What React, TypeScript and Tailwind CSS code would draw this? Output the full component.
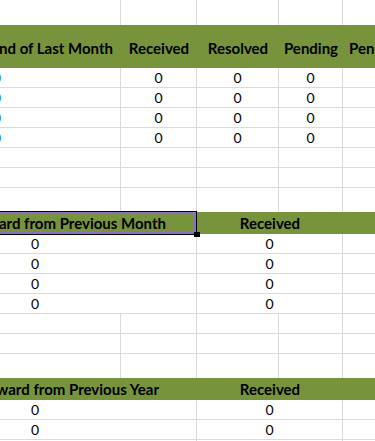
import React from "react";

const line = "border-[#dadada]";

function Zero({ blue }: { blue?: boolean }) {
  return <span className={blue ? "text-[#1b78d0]" : "text-black"}>0</span>;
}

function FourCols({ withZeros, rowClass }: { withZeros: boolean; rowClass: string }) {
  return (
    <div className={`flex ${rowClass}`}>
      <div className={`w-[121px] shrink-0 border-r ${line} flex items-center justify-start overflow-hidden`}>
        {withZeros && (
          <span className="-ml-[7px]">
            <Zero blue />
          </span>
        )}
      </div>
      <div className={`w-[76px] shrink-0 border-r ${line} flex items-center justify-center`}>
        {withZeros && <Zero />}
      </div>
      <div className={`w-[82px] shrink-0 border-r ${line} flex items-center justify-center`}>
        {withZeros && <Zero />}
      </div>
      <div className={`w-[64px] shrink-0 border-r ${line} flex items-center justify-center`}>
        {withZeros && <Zero />}
      </div>
      <div className="flex-1" />
    </div>
  );
}

function MergedRow({ zeros, rowClass }: { zeros: boolean; rowClass: string }) {
  return (
    <div className={`flex ${rowClass}`}>
      <div className={`w-[197px] shrink-0 border-r ${line} flex items-center pl-[31px]`}>
        {zeros && <Zero />}
      </div>
      <div className={`w-[146px] shrink-0 border-r ${line} flex items-center justify-center`}>
        {zeros && <Zero />}
      </div>
      <div className="flex-1" />
    </div>
  );
}

function GreenHeader({ title, pr, selected }: { title: string; pr: string; selected?: boolean }) {
  return (
    <div className="flex h-[22px] bg-[#77933c] font-bold text-[15px]">
      <div className={`relative w-[197px] shrink-0 flex items-center justify-end overflow-visible ${pr}`}>
        <span className="whitespace-nowrap">{title}</span>
        {selected && (
          <div className="absolute -left-[3px] right-0 -top-px -bottom-px z-10 border border-black">
            <div className="w-full h-full border-2 border-[#8b6fc7]" />
            <div className="absolute -right-[4px] -bottom-[3px] w-[6px] h-[5px] bg-black" />
          </div>
        )}
      </div>
      <div className="w-[146px] shrink-0 flex items-center justify-center">
        <span>Received</span>
      </div>
      <div className="flex-1" />
    </div>
  );
}

export default function App() {
  return (
    <div className="w-[375px] h-[441px] overflow-hidden bg-white font-['Lato',sans-serif] text-[14px] text-black leading-none">
      {/* Section 1 */}
      <FourCols withZeros={false} rowClass="h-[25px]" />
      <div className="flex h-[43px] bg-[#77933c] font-bold text-[15px]">
        <div className="w-[121px] shrink-0 flex items-center justify-end pr-[8px] pt-[3px] overflow-hidden">
          <span className="whitespace-nowrap">Pending at the End of Last Month</span>
        </div>
        <div className="w-[76px] shrink-0 flex items-center justify-center pt-[3px]">Received</div>
        <div className="w-[82px] shrink-0 flex items-center justify-center pt-[3px]">Resolved</div>
        <div className="w-[64px] shrink-0 flex items-center justify-center pt-[3px]">Pending</div>
        <div className="flex-1 flex items-center pl-[6px] pt-[3px] overflow-hidden">
          <span className="whitespace-nowrap">Pending %</span>
        </div>
      </div>
      <FourCols withZeros rowClass={`h-[20px] border-b ${line}`} />
      <FourCols withZeros rowClass={`h-[20px] border-b ${line}`} />
      <FourCols withZeros rowClass={`h-[20px] border-b ${line}`} />
      <FourCols withZeros rowClass={`h-[20px] border-b ${line}`} />
      <FourCols withZeros={false} rowClass={`h-[20px] border-b ${line}`} />
      <FourCols withZeros={false} rowClass={`h-[20px] border-b ${line}`} />
      <FourCols withZeros={false} rowClass="h-[24px]" />

      {/* Section 2 */}
      <GreenHeader title="Brought Forward from Previous Month" pr="pr-[31px]" selected />
      <MergedRow zeros rowClass={`h-[20px] border-b ${line}`} />
      <MergedRow zeros rowClass={`h-[20px] border-b ${line}`} />
      <MergedRow zeros rowClass={`h-[20px] border-b ${line}`} />
      <MergedRow zeros rowClass={`h-[20px] border-b ${line}`} />
      <FourCols withZeros={false} rowClass={`h-[20px] border-b ${line}`} />
      <FourCols withZeros={false} rowClass={`h-[20px] border-b ${line}`} />
      <FourCols withZeros={false} rowClass="h-[24px]" />

      {/* Section 3 */}
      <GreenHeader title="Brought Forward from Previous Year" pr="pr-[38px]" />
      <MergedRow zeros rowClass={`h-[20px] border-b ${line}`} />
      <MergedRow zeros rowClass={`h-[20px] border-b ${line}`} />
      <MergedRow zeros rowClass={`h-[20px] border-b ${line}`} />
    </div>
  );
}
